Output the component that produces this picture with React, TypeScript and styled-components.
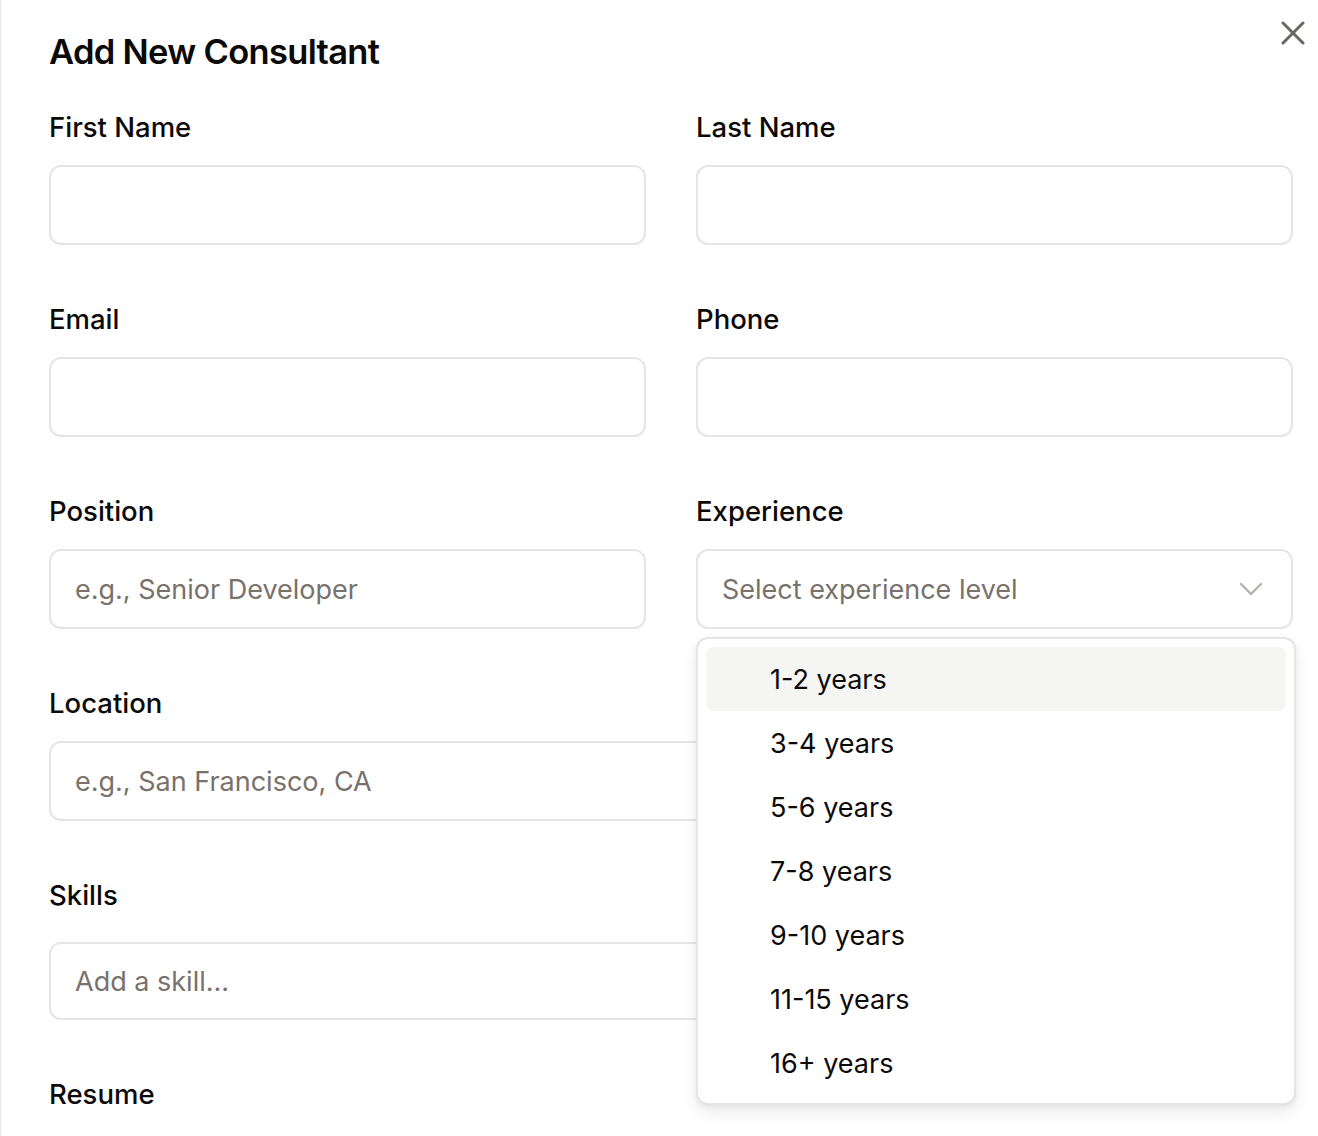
import React from "react";
import styled, { createGlobalStyle } from "styled-components";
import { ChevronDown, X } from "lucide-react";

const GlobalStyle = createGlobalStyle`
  html, body {
    margin: 0;
    padding: 0;
    background: #ffffff;
    overflow: hidden;
  }
  body {
    font-family: Inter, "Noto Sans", "Liberation Sans", sans-serif;
    color: #0c0a09;
    -webkit-font-smoothing: antialiased;
  }
  * { box-sizing: border-box; }
`;

const Dialog = styled.div`
  position: relative;
  width: 1342px;
  height: 1136px;
  border-left: 1px solid #e7e5e4;
  padding: 35px 48px 0 48px;
  background: #ffffff;
`;

const Title = styled.h2`
  margin: 0;
  font-size: 34.5px;
  line-height: 34px;
  font-weight: 600;
  letter-spacing: -0.02em;
  color: #0c0a09;
`;

const CloseButton = styled.button`
  position: absolute;
  top: 13px;
  right: 29px;
  width: 40px;
  height: 40px;
  padding: 0;
  border: none;
  background: transparent;
  color: #44403c;
  opacity: 0.8;
  display: flex;
  align-items: center;
  justify-content: center;
  cursor: pointer;
`;

const Form = styled.form`
  margin-top: 44px;
  display: flex;
  flex-direction: column;
  gap: 60px;
`;

const Row = styled.div`
  display: grid;
  grid-template-columns: 597px 597px;
  column-gap: 50px;
`;

const Field = styled.div<{ $gap?: number }>`
  position: relative;
  display: flex;
  flex-direction: column;
  gap: ${(p) => p.$gap ?? 24}px;
`;

const Label = styled.label`
  font-size: 27.5px;
  line-height: 28px;
  font-weight: 500;
  color: #0c0a09;
`;

const Input = styled.input<{ $h?: number }>`
  width: 100%;
  height: ${(p) => p.$h ?? 80}px;
  border: 2px solid #e7e5e4;
  border-radius: 12px;
  padding: 0 24px;
  font-family: inherit;
  font-size: 27px;
  color: #0c0a09;
  background: #ffffff;
  outline: none;
  &::placeholder {
    color: #78716c;
  }
`;

const Trigger = styled.button`
  width: 100%;
  height: 80px;
  border: 2px solid #e7e5e4;
  border-radius: 12px;
  padding: 0 20px 0 24px;
  background: #ffffff;
  display: flex;
  align-items: center;
  justify-content: space-between;
  font-family: inherit;
  font-size: 27px;
  color: #78716c;
  text-align: left;
  cursor: pointer;
`;

const ChevronIcon = styled.span`
  display: flex;
  color: #78716c;
  opacity: 0.55;
`;

const Popup = styled.div`
  position: absolute;
  top: calc(100% + 8px);
  left: 0;
  width: 600px;
  z-index: 10;
  background: #ffffff;
  border: 2px solid #e7e5e4;
  border-radius: 12px;
  padding: 8px;
  box-shadow: 0 8px 16px rgba(0, 0, 0, 0.08), 0 2px 5px rgba(0, 0, 0, 0.05);
  display: flex;
  flex-direction: column;
`;

const Option = styled.div<{ $active?: boolean }>`
  height: 64px;
  border-radius: 8px;
  padding-left: 64px;
  display: flex;
  align-items: center;
  font-size: 27px;
  color: #0c0a09;
  background: ${(p) => (p.$active ? "#f5f5f4" : "transparent")};
`;

const Full = styled.div`
  width: 1244px;
`;

const StackBlock = styled.div`
  display: flex;
  flex-direction: column;
  gap: 60px;
`;

const options = [
  "1-2 years",
  "3-4 years",
  "5-6 years",
  "7-8 years",
  "9-10 years",
  "11-15 years",
  "16+ years",
];

export default function App() {
  return (
    <>
      <GlobalStyle />
      <Dialog>
        <Title>Add New Consultant</Title>
        <CloseButton type="button" aria-label="Close">
          <X size={40} strokeWidth={1.8} />
        </CloseButton>
        <Form onSubmit={(e) => e.preventDefault()}>
          <Row>
            <Field>
              <Label>First Name</Label>
              <Input />
            </Field>
            <Field>
              <Label>Last Name</Label>
              <Input />
            </Field>
          </Row>
          <Row>
            <Field>
              <Label>Email</Label>
              <Input />
            </Field>
            <Field>
              <Label>Phone</Label>
              <Input />
            </Field>
          </Row>
          <Row>
            <Field>
              <Label>Position</Label>
              <Input placeholder="e.g., Senior Developer" />
            </Field>
            <Field>
              <Label>Experience</Label>
              <Trigger type="button">
                <span>Select experience level</span>
                <ChevronIcon>
                  <ChevronDown size={40} strokeWidth={1.4} />
                </ChevronIcon>
              </Trigger>
              <Popup>
                {options.map((o, i) => (
                  <Option key={o} $active={i === 0}>
                    {o}
                  </Option>
                ))}
              </Popup>
            </Field>
          </Row>
          <StackBlock>
            <Full>
              <Field>
                <Label>Location</Label>
                <Input placeholder="e.g., San Francisco, CA" />
              </Field>
            </Full>
            <Full>
              <Field $gap={33}>
                <Label>Skills</Label>
                <Input $h={78} placeholder="Add a skill..." />
              </Field>
            </Full>
            <Full>
              <Field>
                <Label>Resume</Label>
              </Field>
            </Full>
          </StackBlock>
        </Form>
      </Dialog>
    </>
  );
}
